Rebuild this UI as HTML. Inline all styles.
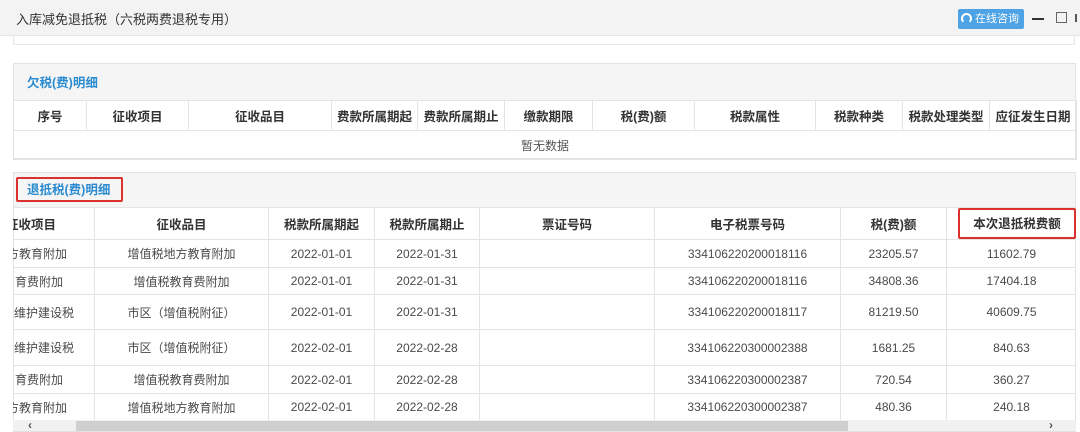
<!DOCTYPE html>
<html><head><meta charset="utf-8"><style>
*{margin:0;padding:0;box-sizing:border-box}
body{width:1080px;height:431px;overflow:hidden;background:#fff;font-family:"Liberation Sans","Noto Sans CJK SC",sans-serif;font-size:12px;color:#444;position:relative}
.abs{position:absolute}
.titlebar{left:0;top:0;width:1080px;height:36px;background:#f3f3f3;border-bottom:1px solid #e6e6e6}
.panel{border:1px solid #e3e3e3;background:#fff}
.ph{background:#f5f5f5;color:#2a8bd0;font-weight:bold;font-size:12.5px}
table{border-collapse:collapse;table-layout:fixed;position:absolute}
td,th{border:1px solid #e4e4e4;text-align:center;white-space:nowrap;overflow:hidden}
th{font-weight:bold;color:#333;font-size:12.5px}
td{color:#4a4a4a;font-size:12px}
</style></head><body>
<div class="abs titlebar"></div>
<div class="abs" style="left:16px;top:9px;font-size:13px;color:#333">入库减免退抵税（六税两费退税专用）</div>
<div class="abs" style="left:958px;top:9px;width:66px;height:20px;background:#4da3e6;border-radius:2px;color:#fff;font-size:11px;line-height:20px;padding-left:17px">在线咨询</div>
<div class="abs" style="left:961px;top:13px;width:11px;height:11px;border:2px solid #fff;border-bottom-color:transparent;border-radius:50%"></div>
<div class="abs" style="left:1032px;top:18px;width:12px;height:2px;background:#333"></div>
<div class="abs" style="left:1056px;top:12px;width:11px;height:11px;border:1px solid #666"></div>
<div class="abs" style="left:1075px;top:14px;width:2px;height:8px;background:#555"></div>
<div class="abs" style="left:13px;top:36px;width:1062px;height:9px;border:1px solid #e6e6e6;border-top:none;background:#fff"></div>

<div class="abs panel" style="left:13px;top:63px;width:1063px;height:96px"></div>
<div class="abs ph" style="left:14px;top:64px;width:1061px;height:36px;line-height:38px;padding-left:13px">欠税(费)明细</div>
<table style="left:13px;top:100px;width:1063px">
<colgroup><col style="width:73px"><col style="width:102px"><col style="width:143px"><col style="width:86px"><col style="width:87px"><col style="width:88px"><col style="width:102px"><col style="width:121px"><col style="width:87px"><col style="width:87px"><col style="width:87px"></colgroup>
<tr style="height:30px"><th>序号</th><th>征收项目</th><th>征收品目</th><th>费款所属期起</th><th>费款所属期止</th><th>缴款期限</th><th>税(费)额</th><th>税款属性</th><th>税款种类</th><th>税款处理类型</th><th>应征发生日期</th></tr>
<tr style="height:29px"><td colspan="11" style="color:#555">暂无数据</td></tr>
</table>

<div class="abs panel" style="left:13px;top:172px;width:1063px;height:260px"></div>
<div class="abs ph" style="left:14px;top:173px;width:1061px;height:34px"></div>
<div class="abs" style="left:16px;top:177px;width:107px;height:25px;border:2px solid #d9322e;border-radius:2px;color:#2a8bd0;font-weight:bold;font-size:12.5px;line-height:22px;padding-left:9px">退抵税(费)明细</div>
<div class="abs" style="left:13px;top:207px;width:1063px;height:214px;overflow:hidden">
<table style="left:-33px;top:0;width:1096px">
<colgroup><col style="width:114px"><col style="width:174px"><col style="width:106px"><col style="width:105px"><col style="width:175px"><col style="width:186px"><col style="width:106px"><col style="width:130px"></colgroup>
<tr style="height:32px"><th style="text-align:right;padding-right:38px">征收项目</th><th>征收品目</th><th>税款所属期起</th><th>税款所属期止</th><th>票证号码</th><th>电子税票号码</th><th>税(费)额</th><th style="position:relative"><span style="position:absolute;left:11px;right:0;top:0;bottom:0;border:2px solid #d9322e;border-radius:2px;line-height:28px">本次退抵税费额</span></th></tr>
<tr style="height:28px"><td style="text-align:right;padding-right:27px">方教育附加</td><td>增值税地方教育附加</td><td>2022-01-01</td><td>2022-01-31</td><td></td><td>334106220200018116</td><td>23205.57</td><td>11602.79</td></tr>
<tr style="height:27px"><td style="text-align:left;padding-left:34px">育费附加</td><td>增值税教育费附加</td><td>2022-01-01</td><td>2022-01-31</td><td></td><td>334106220200018116</td><td>34808.36</td><td>17404.18</td></tr>
<tr style="height:35px"><td style="text-align:left;padding-left:33px">维护建设税</td><td>市区（增值税附征）</td><td>2022-01-01</td><td>2022-01-31</td><td></td><td>334106220200018117</td><td>81219.50</td><td>40609.75</td></tr>
<tr style="height:36px"><td style="text-align:left;padding-left:33px">维护建设税</td><td>市区（增值税附征）</td><td>2022-02-01</td><td>2022-02-28</td><td></td><td>334106220300002388</td><td>1681.25</td><td>840.63</td></tr>
<tr style="height:28px"><td style="text-align:left;padding-left:34px">育费附加</td><td>增值税教育费附加</td><td>2022-02-01</td><td>2022-02-28</td><td></td><td>334106220300002387</td><td>720.54</td><td>360.27</td></tr>
<tr style="height:27px"><td style="text-align:right;padding-right:27px">方教育附加</td><td>增值税地方教育附加</td><td>2022-02-01</td><td>2022-02-28</td><td></td><td>334106220300002387</td><td>480.36</td><td>240.18</td></tr>
</table>
</div>
<div class="abs" style="left:13px;top:420px;width:1063px;height:11px;background:#f1f1f1"></div>
<div class="abs" style="left:76px;top:421px;width:772px;height:10px;background:#cfcfcf"></div>
<div class="abs" style="left:28px;top:418px;font-size:12px;color:#555;font-weight:bold">‹</div>
<div class="abs" style="left:1049px;top:418px;font-size:12px;color:#555;font-weight:bold">›</div>
</body></html>
